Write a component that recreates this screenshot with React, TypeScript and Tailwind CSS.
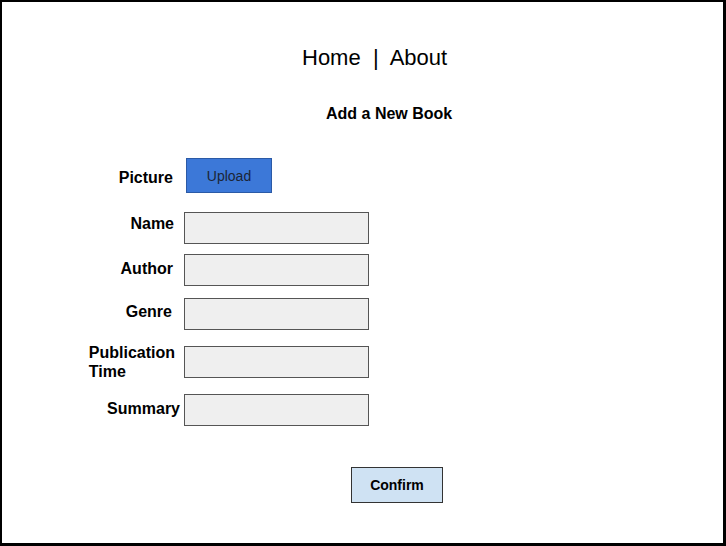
import React from "react";

const Field = ({
  label,
  rowClass,
  labelClass,
}: {
  label: React.ReactNode;
  rowClass: string;
  labelClass: string;
}) => (
  <div className={`flex items-center ${rowClass}`}>
    <div className="w-[94px] flex justify-end">
      <span className={`text-left font-bold text-[16px] leading-[19px] text-black ${labelClass}`}>
        {label}
      </span>
    </div>
    <input
      type="text"
      className="ml-[10px] w-[185px] h-[32px] bg-[#efefef] border border-[#555555] outline-none"
    />
  </div>
);

export default function App() {
  return (
    <div
      className="w-[726px] h-[546px] bg-white border-l-2 border-t-2 border-r-[3px] border-b-[3px] border-black flex flex-col"
      style={{ fontFamily: '"Liberation Sans", Arial, sans-serif' }}
    >
      <nav className="pt-[43px] pl-[300px] text-[22px] leading-[26px] text-black whitespace-pre">
        <span>Home</span>
        <span>{"  |  "}</span>
        <span>About</span>
      </nav>

      <h1 className="mt-[34px] pl-[324px] text-[16px] leading-[18px] font-bold text-black">
        Add a New Book
      </h1>

      <form className="pl-[78px] mt-[35px] flex flex-col">
        <div className="flex items-center">
          <div className="w-[94px] flex justify-end">
            <span className="mt-[3px] mr-[1px] font-bold text-[16px] leading-[19px] text-black">
              Picture
            </span>
          </div>
          <button
            type="button"
            className="ml-[12px] w-[86px] h-[35px] pt-[2px] bg-[#3c78d8] border border-[#2b5aa6] text-[14px] text-[#1b2536]"
          >
            Upload
          </button>
        </div>

        <Field label="Name" rowClass="mt-[19px]" labelClass="mb-[10px]" />
        <Field label="Author" rowClass="mt-[10px]" labelClass="mb-[4px] mr-[1px]" />
        <Field label="Genre" rowClass="mt-[12px]" labelClass="mb-[6px] mr-[2px]" />
        <Field
          label={
            <>
              Publication
              <br />
              Time
            </>
          }
          rowClass="mt-[13px]"
          labelClass="mr-[-1px]"
        />
        <Field label="Summary" rowClass="mt-[13px]" labelClass="mb-[4px] mr-[-6px]" />

        <div className="mt-[41px] pl-[271px]">
          <button
            type="button"
            className="w-[92px] h-[36px] bg-[#cfe2f3] border border-[#333333] text-[14px] font-bold text-black"
          >
            Confirm
          </button>
        </div>
      </form>
    </div>
  );
}
